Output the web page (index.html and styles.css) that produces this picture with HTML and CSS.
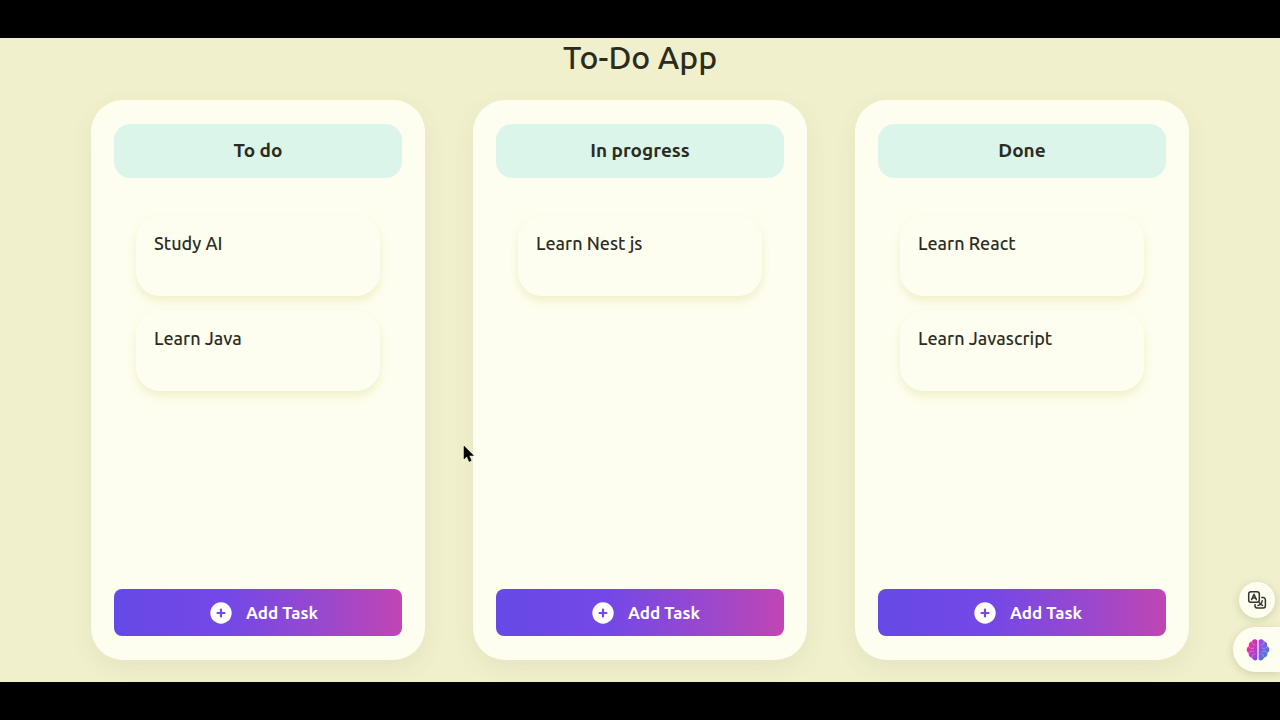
FILE: index.html
```html
<!DOCTYPE html>
<html lang="en">
<head>
<meta charset="utf-8">
<title>To-Do App</title>
<link rel="stylesheet" href="styles.css">
</head>
<body>
<svg class="defs" aria-hidden="true">
  <symbol id="plus" viewBox="0 0 22 22"><circle cx="11" cy="11" r="10.7" fill="#fff"/><path d="M11 7.500v7M7.500 11h7" stroke="#7548e6" stroke-width="2.200" stroke-linecap="round"/></symbol>
</svg>
<div class="app">
  <h1 class="title">To-Do App</h1>
  <main class="board">
    <section class="column">
      <h2 class="column-title">To do</h2>
      <ul class="tasks"><li class="task">Study AI</li><li class="task">Learn Java</li></ul>
      <button class="add" type="button"><svg class="add-icon" aria-hidden="true"><use href="#plus"/></svg>Add Task</button>
    </section>
    <section class="column">
      <h2 class="column-title">In progress</h2>
      <ul class="tasks"><li class="task">Learn Nest js</li></ul>
      <button class="add" type="button"><svg class="add-icon" aria-hidden="true"><use href="#plus"/></svg>Add Task</button>
    </section>
    <section class="column">
      <h2 class="column-title">Done</h2>
      <ul class="tasks"><li class="task">Learn React</li><li class="task">Learn Javascript</li></ul>
      <button class="add" type="button"><svg class="add-icon" aria-hidden="true"><use href="#plus"/></svg>Add Task</button>
    </section>
  </main>
  <button class="float translate" type="button" aria-label="Translate">
    <svg width="20" height="20" viewBox="0 0 20 20" fill="none" stroke="#333" stroke-width="1.5" stroke-linecap="round" stroke-linejoin="round"><rect x="1.700" y="1.700" width="10.600" height="10.600" rx="2.400"/><path d="M4.600 9.600 7 4.300l2.400 5.300M5.500 8h3M14.800 7.600h1.400a2.200 2.200 0 0 1 2.200 2.200v6a2.200 2.200 0 0 1-2.200 2.200h-6A2.200 2.200 0 0 1 8 15.800v-1.200M11 15.400c2.300-.5 3.700-2 4.200-4.600M12.500 12.800c.8 1.300 1.700 2.100 3 2.600"/></svg>
  </button>
  <button class="float brain" type="button" aria-label="Assistant">
    <svg width="24" height="24" viewBox="0 0 24 24">
      <defs><linearGradient id="lobe" x1="0" y1="0" x2="1" y2="1"><stop offset="0" stop-color="#ff7a4a"/><stop offset=".3" stop-color="#e62fa4"/><stop offset="1" stop-color="#7b4df0"/></linearGradient><linearGradient id="lobe2" x1="0" y1="0" x2="1" y2="1"><stop offset="0" stop-color="#b23de0"/><stop offset="1" stop-color="#288ce0"/></linearGradient></defs>
      <path fill="url(#lobe)" d="M11.400 2.500C9.500.2 6.500 1.100 6 3.400 3.500 3.400 2.200 6 3 8 0 9.500 0 13.500 2.600 15c-.3 2.800 1.300 4.600 3.400 4.800.8 2.800 4 3.400 5.400 1.400z"/>
      <path fill="url(#lobe2)" d="M12.600 2.500c1.900-2.300 4.900-1.400 5.400.9C20.500 3.400 21.800 6 21 8c3 1.500 3 5.500.4 7 .3 2.800-1.300 4.600-3.400 4.800-.8 2.800-4 3.400-5.400 1.400z"/>
      <path fill="none" stroke="#fff" stroke-opacity=".35" stroke-width=".8" stroke-linecap="round" d="M6 4c0 2 1 3 3 3M3 9c1 1.500 3 2 5 1M3 15c1-2 3-2.500 5-1.500M6 19c0-2 1-3 3-3M18 4c0 2-1 3-3 3M21 9c-1 1.500-3 2-5 1M21 15c-1-2-3-2.500-5-1.500M18 19c0-2-1-3-3-3"/>
    </svg>
  </button>
  <svg class="pointer" width="12" height="18" viewBox="0 0 12 18" aria-hidden="true"><path d="M1 1v13l3-2.800 2.200 5.300 2-.9L6 10.500h4.500z" fill="#000" stroke="#000" stroke-width=".5"/></svg>
</div>
</body>
</html>
```
FILE: styles.css
```css
* { box-sizing: border-box; }
body { margin: 0; background: #000; color: #2b2c1e; font-family: Ubuntu, "Noto Sans", "Open Sans", sans-serif; }
.defs { position: absolute; width: 0; height: 0; }
.app { position: relative; margin: 38px 0; min-height: calc(100vh - 76px); padding-bottom: 22px; display: flex; flex-direction: column; background: #f0f0cc; overflow: hidden; }
.title { margin: 0 0 24px; font-size: 32px; line-height: 38px; font-weight: 500; text-align: center; }
.board { flex: 1; display: grid; grid-template-columns: repeat(3, 1fr); gap: 48px; padding: 0 91px; }
.column { display: flex; flex-direction: column; padding: 24px 23px; border-radius: 32px; background: #fefef0; box-shadow: 0 8px 24px rgba(80, 80, 40, .07); }
.column-title { margin: 0; padding-bottom: 2px; border-radius: 16px; background: #dcf5ea; font-size: 19px; line-height: 52px; font-weight: 700; text-align: center; }
.tasks { flex: 1; list-style: none; margin: 38px 22px 0; padding: 0; display: flex; flex-direction: column; gap: 15px; }
.task { min-height: 80px; padding: 15px 18px; border-radius: 24px; background: #fefef0; box-shadow: 0 5px 10px rgba(190, 180, 50, .2); font-size: 18px; line-height: 24px; font-weight: 500; }
.add { display: flex; align-items: center; justify-content: center; gap: 14px; height: 47px; padding: 0 0 0 12px; border: 0; border-radius: 8px; background: linear-gradient(90deg, #6549e6, #7548e6 40%, #9c48cc 75%, #c145b4); color: #fff; font: 600 17px/24px Ubuntu, "Noto Sans", "Open Sans", sans-serif; }
.add-icon { width: 22px; height: 22px; }
.float { position: absolute; display: flex; align-items: center; border: 0; background: #fefef0; box-shadow: 0 2px 8px rgba(60, 60, 20, .18); }
.translate { right: 5px; bottom: 64px; width: 36px; height: 36px; padding: 0; justify-content: center; border-radius: 50%; }
.brain { right: 0; bottom: 10px; width: 47px; height: 45px; padding: 0 0 0 13px; border-radius: 23px 0 0 23px; }
.pointer { position: absolute; left: 463px; top: 407px; }
```
